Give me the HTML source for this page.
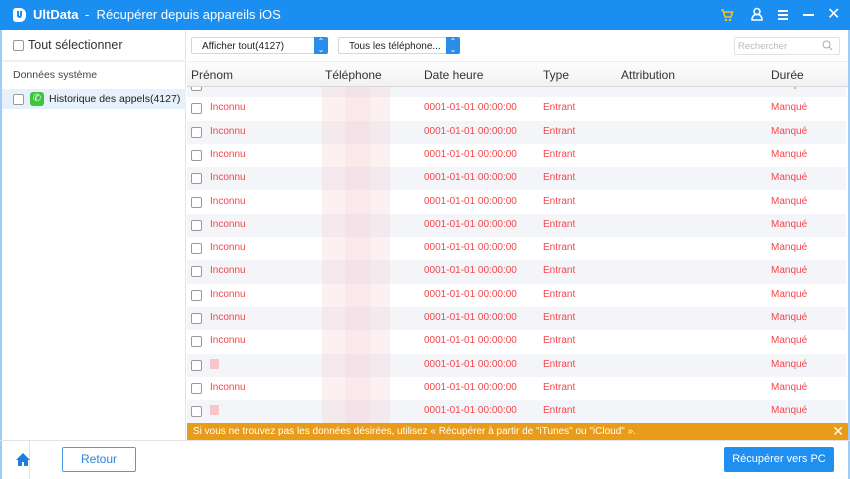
<!DOCTYPE html>
<html><head><meta charset="utf-8"><style>
*{margin:0;padding:0;box-sizing:border-box}
body{width:850px;height:479px;overflow:hidden;background:#fff;font-family:"Liberation Sans",sans-serif;font-size:11px;color:#333;position:relative}
.abs{position:absolute}
.title{left:0;top:0;width:850px;height:30px;background:#1a8ff1;color:#fff}
.cb{position:absolute;width:11px;height:11px;border:1px solid #999;border-radius:2px;background:#fff}
.row{position:absolute;left:0;width:659px;height:23.3px}
.row span{position:absolute;top:5px;color:#f5464c;font-size:10px}
.sel{position:absolute;height:17px;border:1px solid #d6d6d6;border-radius:2px;background:#fff;font-size:10px;padding:3px 0 0 10px;color:#222}
.sel i{position:absolute;right:-1px;top:-1px;width:14px;height:17px;background:#2a8ee8;border-radius:0 2px 2px 0;color:#fff;font-style:normal;font-size:8px;text-align:center;line-height:8px;padding-top:1px}
</style></head><body>
<div class="abs title">
 <div class="abs" style="left:13px;top:8px;width:13px;height:14px;background:#fff;border-radius:3px 6px 6px 3px"></div>
 <div class="abs" style="left:17px;top:11px;width:5px;height:7px;border:2px solid #1a8ff1;border-top:none;border-radius:0 0 3px 3px"></div>
 <div class="abs" style="left:33px;top:7px;font-size:13px;font-weight:bold">UltData</div>
 <div class="abs" style="left:85px;top:7px;font-size:13px">-&nbsp; Récupérer depuis appareils iOS</div>
 <svg class="abs" style="left:720px;top:8px" width="14" height="14" viewBox="0 0 14 14"><path d="M1 2h2l2 7h6l1.5-5H4" fill="none" stroke="#f3c21d" stroke-width="1.6"/><circle cx="6" cy="12" r="1.2" fill="#f3c21d"/><circle cx="10" cy="12" r="1.2" fill="#f3c21d"/></svg>
 <svg class="abs" style="left:750px;top:7px" width="14" height="14" viewBox="0 0 14 14"><circle cx="7" cy="4.5" r="3" fill="none" stroke="#fff" stroke-width="1.5"/><path d="M2 13c0-4 2-5.5 5-5.5s5 1.5 5 5.5z" fill="none" stroke="#fff" stroke-width="1.5"/></svg>
 <div class="abs" style="left:778px;top:10px;width:10px;height:2px;background:#fff;box-shadow:0 4px 0 #fff,0 8px 0 #fff"></div>
 <div class="abs" style="left:803px;top:14px;width:11px;height:2px;background:#fff"></div>
 <div class="abs" style="left:827px;top:4px;font-size:16px;color:#fff">✕</div>
</div>
<div class="abs" style="left:0;top:30px;width:186px;height:410px;background:#fff;border-right:1px solid #e4e4e4"></div>
<div class="abs" style="left:0;top:30px;width:2px;height:449px;background:#9fcdf6"></div>
<div class="abs" style="left:848px;top:30px;width:2px;height:449px;background:#9fcdf6"></div>
<div class="cb" style="left:13px;top:40px;width:11px;height:11px"></div>
<div class="abs" style="left:28px;top:38px;font-size:12.5px;color:#333">Tout sélectionner</div>
<div class="abs" style="left:2px;top:60px;width:184px;height:2px;background:#f0f0f0"></div>
<div class="abs" style="left:13px;top:69px;font-size:10.5px;color:#444">Données système</div>
<div class="abs" style="left:2px;top:89px;width:184px;height:20px;background:#e6f1fc"></div>
<div class="cb" style="left:13px;top:94px"></div>
<div class="abs" style="left:30px;top:92px;width:14px;height:14px;background:#3cc63c;border-radius:3px;color:#fff;font-size:10px;text-align:center;line-height:14px">✆</div>
<div class="abs" style="left:49px;top:93px;font-size:10.5px;color:#222">Historique des appels(4127)</div>
<div class="sel" style="left:191px;top:37px;width:137px">Afficher tout(4127)<i>⌃<br>⌄</i></div>
<div class="sel" style="left:338px;top:37px;width:122px">Tous les téléphone...<i>⌃<br>⌄</i></div>
<div class="abs" style="left:734px;top:37px;width:106px;height:18px;border:1px solid #e2e2e2;border-radius:2px;color:#bbb;font-size:9.5px;padding:3px 0 0 3px">Rechercher</div>
<svg class="abs" style="left:822px;top:40px" width="11" height="11"><circle cx="4.5" cy="4.5" r="3.5" fill="none" stroke="#aaa"/><path d="M7 7l3 3" stroke="#aaa"/></svg>
<div class="abs" style="left:187px;top:61px;width:661px;height:26px;background:linear-gradient(#fdfdfd,#f1f1f1);border-top:1px solid #eee;border-bottom:1px solid #d8d8d8;font-size:12px;color:#333">
 <span class="abs" style="left:4px;top:6px">Prénom</span><span class="abs" style="left:138px;top:6px">Téléphone</span><span class="abs" style="left:237px;top:6px">Date heure</span><span class="abs" style="left:356px;top:6px">Type</span><span class="abs" style="left:434px;top:6px">Attribution</span><span class="abs" style="left:584px;top:6px">Durée</span>
</div>
<div class="abs" id="rows" style="left:187px;top:87px;width:659px;height:336px;overflow:hidden"></div>
<script>
var r=document.getElementById('rows');var h='';
for(var i=0;i<15;i++){var t=-13+23.3*i;var g=(i%2==0);var blank=(i==12||i==14);
h+='<div class="row" style="top:'+t+'px;background:'+(g?'#f3f5f9':'#fff')+'">'+
'<div class="cb" style="left:4px;top:6px"></div>'+
(blank?'<div class="abs" style="left:23px;top:5px;width:9px;height:10px;background:#f6c6cb"></div>':'<span style="left:23px">Inconnu</span>')+
'<span style="left:237px">0001-01-01 00:00:00</span><span style="left:356px">Entrant</span><span style="left:584px">Manqué</span></div>';}
h+='<div class="abs" style="left:135px;top:0;width:68px;height:336px;background:rgba(250,205,210,.3)"></div><div class="abs" style="left:158px;top:0;width:25px;height:336px;background:rgba(240,190,200,.15)"></div>';
r.insertAdjacentHTML('beforeend',h);
</script>
<div class="abs" style="left:187px;top:423px;width:661px;height:17px;background:#e99b1a;color:#fff;font-size:10px;padding:3px 0 0 6px">Si vous ne trouvez pas les données désirées, utilisez « Récupérer à partir de "iTunes" ou "iCloud" ».<span class="abs" style="right:4px;top:0;font-size:14px">✕</span></div>
<div class="abs" style="left:0;top:440px;width:850px;height:1px;background:#e3e3e3"></div>
<div class="abs" style="left:29px;top:441px;width:1px;height:38px;background:#e3e3e3"></div>
<svg class="abs" style="left:15px;top:452px" width="16" height="15" viewBox="0 0 16 15"><path d="M8 1L1 8h2v6h4v-4h2v4h4V8h2z" fill="#1a7fe0"/></svg>
<div class="abs" style="left:62px;top:447px;width:74px;height:25px;border:1px solid #4a9ee8;border-radius:2px;color:#2a86dd;font-size:12px;text-align:center;line-height:23px">Retour</div>
<div class="abs" style="left:724px;top:447px;width:110px;height:25px;background:#1f8ff0;border-radius:2px;color:#fff;font-size:11px;text-align:center;line-height:25px">Récupérer vers PC</div>
</body></html>
